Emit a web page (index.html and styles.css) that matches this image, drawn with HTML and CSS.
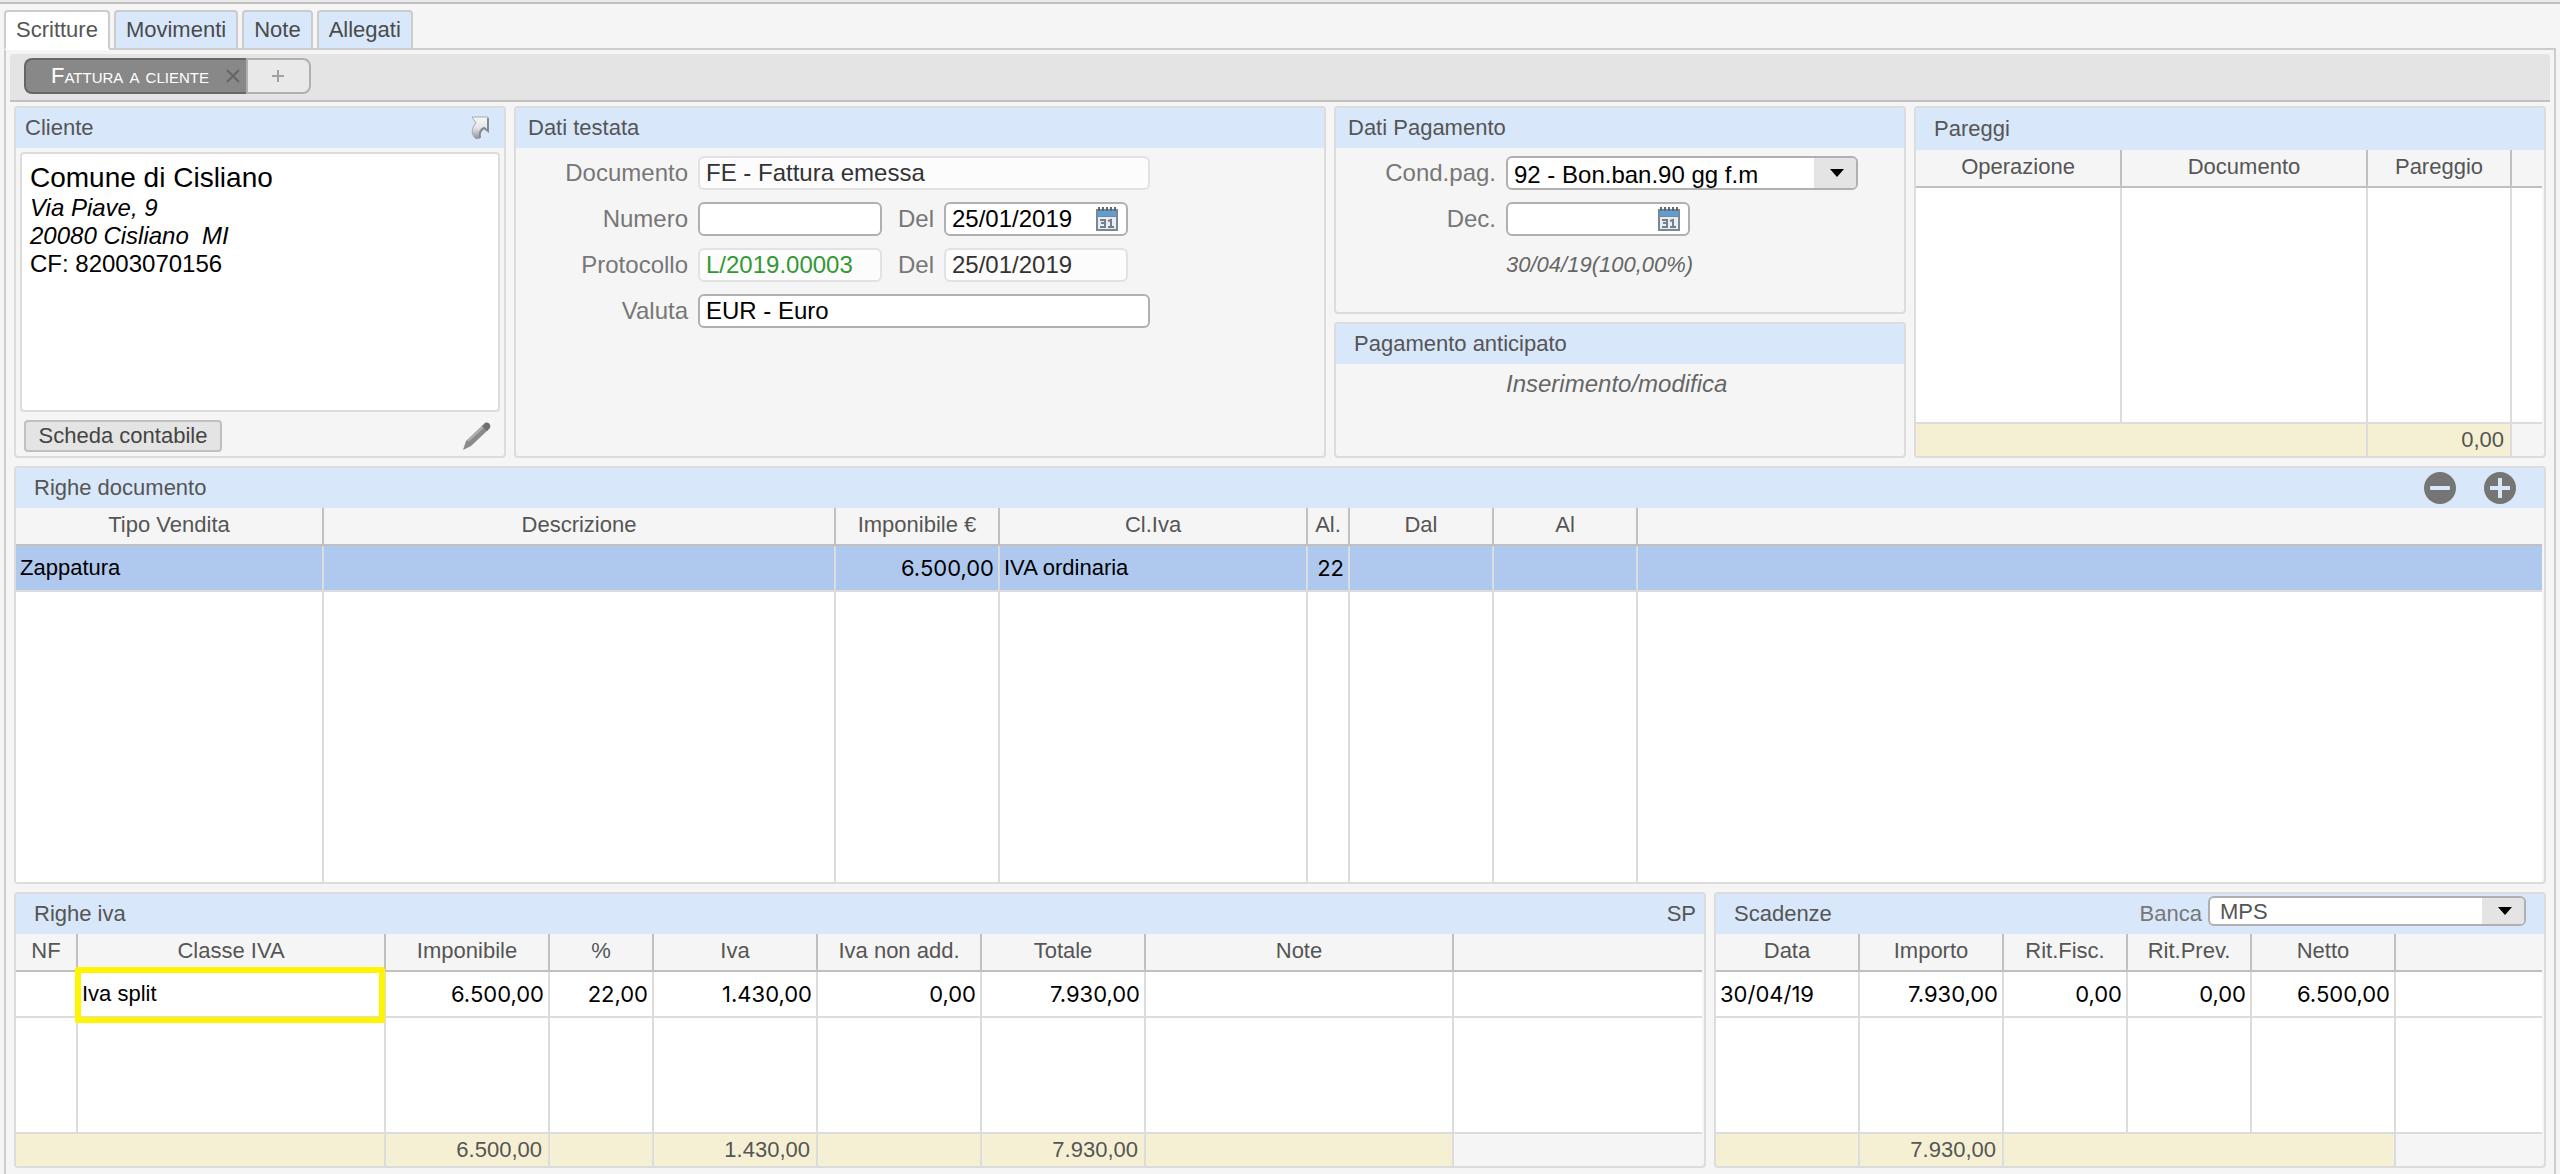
FILE: index.html
```html
<!DOCTYPE html>
<html lang="it">
<head>
<meta charset="utf-8">
<title>Scritture - Fattura a cliente</title>
<link rel="stylesheet" href="styles.css">
</head>
<body>
<svg class="sprite" aria-hidden="true">
  <symbol id="calendar" viewBox="0 0 24 24">
    <rect x="1" y="2" width="22" height="22" fill="#7b8794"/>
    <rect x="3" y="4" width="18" height="5" fill="#5d9fd0"/>
    <rect x="3" y="10" width="18" height="12" fill="#e9edf2"/>
    <path d="M4 0v4M8 0v4M12 0v4M16 0v4M20 0v4" stroke="#5f6871" stroke-width="2"/>
    <path d="M5 13h5v7h-5M6 16h4M13 14l3-1v7M13 20h6" fill="none" stroke="#747f8c" stroke-width="2"/>
  </symbol>
</svg>
<div class="page">
  <nav class="tabs">
    <button class="tab tab-active" type="button">Scritture</button>
    <button class="tab" type="button">Movimenti</button>
    <button class="tab" type="button">Note</button>
    <button class="tab" type="button">Allegati</button>
  </nav>
  <main class="frame">
    <div class="subtabs">
      <div class="subtab">
        <button class="subtab-name" type="button">Fattura a cliente</button>
        <button class="subtab-close" type="button" aria-label="Chiudi"><svg width="14" height="14" viewBox="0 0 14 14"><path d="M1 1l12 12M13 1L1 13" stroke="#656565" stroke-width="2"/></svg></button>
      </div>
      <button class="subtab-add" type="button" aria-label="Aggiungi"><svg width="12" height="12" viewBox="0 0 12 12"><path d="M6 0v12M0 6h12" stroke="#a2a2a2" stroke-width="2"/></svg></button>
    </div>
    <div class="content">
      <div class="top">
        <section class="panel">
          <header class="head">
            <h2>Cliente</h2>
            <button class="icon-btn open-btn" type="button" aria-label="Apri"><svg width="20" height="24" viewBox="0 0 20 24">
              <defs><linearGradient id="steel" x1="0" y1="0" x2="0" y2="1"><stop offset="0" stop-color="#f6f7f8"/><stop offset=".5" stop-color="#e2e5e8"/><stop offset="1" stop-color="#8b929a"/></linearGradient></defs>
              <path d="M2 1H18V15L14 12C10 14 9 17 10 22L6 23C1 19 1 12 6 7Z" fill="url(#steel)" stroke="#a4abb3" stroke-width="1"/>
              <path d="M18 2V15L14 12C10 14 9 17 10 22" fill="none" stroke="#848a92" stroke-width="2"/>
            </svg></button>
          </header>
          <div class="client-body">
            <address class="client-card">
              <strong>Comune di Cisliano</strong>
              <em>Via Piave, 9</em>
              <em>20080 Cisliano&nbsp; MI</em>
              <span>CF: 82003070156</span>
            </address>
            <div class="client-actions">
              <button class="push" type="button">Scheda contabile</button>
              <button class="icon-btn" type="button" aria-label="Modifica"><svg width="30" height="30" viewBox="0 0 30 30"><path d="M1 29l3-9L21 4l5 5L9 25z" fill="#8a8a8a"/><path d="M6 20L21 6" stroke="#b0b0b0" stroke-width="2"/><path d="M22 3c3-4 9 1 5 5l-2 2-5-5z" fill="#6e6e6e"/></svg></button>
            </div>
          </div>
        </section>

        <section class="panel">
          <header class="head form-head"><h2>Dati testata</h2></header>
          <form class="form form-doc">
            <label for="doc">Documento</label>
            <input id="doc" class="field wide" type="text" value="FE - Fattura emessa" readonly>
            <label for="num">Numero</label>
            <input id="num" class="field" type="text">
            <label for="num-date">Del</label>
            <span class="date"><input id="num-date" class="field" type="text" value="25/01/2019"><button type="button" aria-label="Calendario"><svg width="24" height="24"><use href="#calendar"/></svg></button></span>
            <label class="row-start" for="prot">Protocollo</label>
            <input id="prot" class="field green" type="text" value="L/2019.00003" readonly>
            <label for="prot-date">Del</label>
            <input id="prot-date" class="field" type="text" value="25/01/2019" readonly>
            <label class="row-start" for="valuta">Valuta</label>
            <input id="valuta" class="field wide" type="text" value="EUR - Euro">
          </form>
        </section>

        <div class="stack">
          <section class="panel">
            <header class="head form-head"><h2>Dati Pagamento</h2></header>
            <form class="form form-pay">
              <label for="cond">Cond.pag.</label>
              <span class="pick pick-cond"><select id="cond" class="field"><option>92 - Bon.ban.90 gg f.m</option></select></span>
              <label for="dec">Dec.</label>
              <span class="date"><input id="dec" class="field" type="text"><button type="button" aria-label="Calendario"><svg width="24" height="24"><use href="#calendar"/></svg></button></span>
              <em class="due">30/04/19(100,00%)</em>
            </form>
          </section>
          <section class="panel">
            <header class="head indent"><h2>Pagamento anticipato</h2></header>
            <a class="edit" href="#">Inserimento/modifica</a>
          </section>
        </div>

        <section class="panel">
          <header class="head indent tall"><h2>Pareggi</h2></header>
          <div class="grid">
            <table>
              <colgroup><col class="w206"><col class="w246"><col class="w144"><col></colgroup>
              <thead><tr><th>Operazione</th><th>Documento</th><th>Pareggio</th><th></th></tr></thead>
              <tbody><tr class="fill"><td></td><td></td><td></td><td></td></tr></tbody>
              <tfoot><tr><td colspan="2"></td><td>0,00</td><td class="none"></td></tr></tfoot>
            </table>
          </div>
        </section>
      </div>

      <section class="panel lines">
        <header class="head indent lines-head">
          <h2>Righe documento</h2>
          <div class="line-tools">
            <button class="icon-btn" type="button" aria-label="Rimuovi riga"><svg width="32" height="32" viewBox="0 0 32 32"><circle cx="16" cy="16" r="16" fill="#757575"/><rect x="6" y="14" width="20" height="4" rx="1" fill="#d8e8fa"/></svg></button>
            <button class="icon-btn" type="button" aria-label="Aggiungi riga"><svg width="32" height="32" viewBox="0 0 32 32"><circle cx="16" cy="16" r="16" fill="#757575"/><path d="M6 16h20M16 6v20" stroke="#d8e8fa" stroke-width="4"/></svg></button>
          </div>
        </header>
        <div class="grid">
          <table>
            <colgroup><col class="w308"><col class="w512"><col class="w164"><col class="w308"><col class="w42"><col class="w144"><col class="w144"><col></colgroup>
            <thead><tr><th>Tipo Vendita</th><th>Descrizione</th><th>Imponibile €</th><th>Cl.Iva</th><th>Al.</th><th>Dal</th><th>Al</th><th></th></tr></thead>
            <tbody>
              <tr class="selected"><td>Zappatura</td><td></td><td class="num">6.500,00</td><td>IVA ordinaria</td><td class="num">22</td><td></td><td></td><td></td></tr>
              <tr class="fill"><td></td><td></td><td></td><td></td><td></td><td></td><td></td><td></td></tr>
            </tbody>
          </table>
        </div>
      </section>

      <div class="bottom">
        <section class="panel">
          <header class="head indent"><h2>Righe iva</h2><span class="flag">SP</span></header>
          <div class="grid">
            <table>
              <colgroup><col class="w62"><col class="w308"><col class="w164"><col class="w104"><col class="w164"><col class="w164"><col class="w164"><col class="w308"><col></colgroup>
              <thead><tr><th>NF</th><th>Classe IVA</th><th>Imponibile</th><th>%</th><th>Iva</th><th>Iva non add.</th><th>Totale</th><th>Note</th><th></th></tr></thead>
              <tbody>
                <tr><td></td><td class="marked">Iva split</td><td class="num">6.500,00</td><td class="num">22,00</td><td class="num">1.430,00</td><td class="num">0,00</td><td class="num">7.930,00</td><td></td><td></td></tr>
                <tr class="fill"><td></td><td></td><td></td><td></td><td></td><td></td><td></td><td></td><td></td></tr>
              </tbody>
              <tfoot><tr><td colspan="2"></td><td>6.500,00</td><td></td><td>1.430,00</td><td></td><td>7.930,00</td><td></td><td class="none"></td></tr></tfoot>
            </table>
          </div>
        </section>
        <section class="panel">
          <header class="head indent">
            <h2>Scadenze</h2>
            <div class="bank">
              <label for="bank">Banca</label>
              <span class="pick pick-bank"><select id="bank" class="field"><option>MPS</option></select></span>
            </div>
          </header>
          <div class="grid">
            <table>
              <colgroup><col class="w144"><col class="w144"><col class="w124"><col class="w124"><col class="w144"><col></colgroup>
              <thead><tr><th>Data</th><th>Importo</th><th>Rit.Fisc.</th><th>Rit.Prev.</th><th>Netto</th><th></th></tr></thead>
              <tbody>
                <tr><td class="when">30/04/19</td><td class="num">7.930,00</td><td class="num">0,00</td><td class="num">0,00</td><td class="num">6.500,00</td><td></td></tr>
                <tr class="fill"><td></td><td></td><td></td><td></td><td></td><td></td></tr>
              </tbody>
              <tfoot><tr><td></td><td>7.930,00</td><td colspan="3"></td><td class="none"></td></tr></tfoot>
            </table>
          </div>
        </section>
      </div>
    </div>
  </main>
</div>
</body>
</html>
```

FILE: styles.css
```css
*, *::before, *::after { box-sizing: border-box; }

body {
  margin: 0;
  background: #f5f5f5;
  color: #555;
  font: 22px "Liberation Sans", Arial, sans-serif;
}

button, input, select { font: inherit; color: inherit; }
button { margin: 0; padding: 0; border: 0; background: none; }
svg { display: block; }
.sprite { position: absolute; width: 0; height: 0; }

.page {
  display: flex;
  flex-direction: column;
  min-height: 100vh;
  padding: 8px 4px 0;
  border-top: 2px solid #e8e8e8;
  box-shadow: inset 0 2px #c0c0c0;
}

/* Main tabs */
.tabs { display: flex; gap: 4px; margin-bottom: -2px; }
.tab {
  height: 40px;
  padding: 0 10px;
  border: 2px solid #ccc;
  border-radius: 4px 4px 0 0;
  background: #d8e8fa;
  color: #4a4a4a;
  position: relative;
}
.tab-active { background: #fff; border-bottom-color: #fff; color: #555; z-index: 1; }

.frame {
  flex: 1;
  display: flex;
  flex-direction: column;
  padding: 4px 4px 0;
  border: 2px solid #ccc;
  border-bottom: 0;
}

/* Document tabs */
.subtabs {
  display: flex;
  padding: 4px 14px 6px;
  border-bottom: 2px solid #c0c0c0;
  border-radius: 4px 4px 0 0;
  background: #e4e4e4;
}
.subtab {
  display: flex;
  align-items: center;
  gap: 17px;
  height: 36px;
  padding: 0 6px 0 25px;
  border: 2px solid #666;
  border-right: 0;
  border-radius: 8px 0 0 8px;
  background: #888;
  color: #fff;
}
.subtab-name { font-variant: small-caps; }
.subtab-add {
  display: grid;
  place-items: center;
  width: 65px;
  height: 36px;
  border: 2px solid #b0b0b0;
  border-radius: 0 8px 8px 0;
  background: #e9e9e9;
}

.content {
  flex: 1;
  display: flex;
  flex-direction: column;
  gap: 8px;
  padding: 4px 4px 6px;
}

/* Panels */
.panel {
  display: flex;
  flex-direction: column;
  min-width: 0;
  border: 2px solid #dcdcdc;
  border-radius: 4px;
}
.head {
  display: flex;
  align-items: center;
  justify-content: space-between;
  height: 40px;
  padding: 0 14px 0 9px;
  border-radius: 2px 2px 0 0;
  background: #d8e8fa;
}
.head h2 { margin: 0; font-size: 22px; font-weight: 400; }
.form-head { padding-left: 12px; }
.indent { padding: 0 8px 0 18px; }
.tall { height: 42px; }

.top {
  display: grid;
  grid-template-columns: 492fr 812fr 572fr 632fr;
  gap: 8px;
  min-height: 352px;
}
.stack { display: grid; grid-template-rows: 208px 1fr; gap: 8px; min-width: 0; }
.lines { flex: 1; }
.bottom {
  display: grid;
  grid-template-columns: 1692fr 832fr;
  gap: 8px;
  min-height: 276px;
}

/* Client */
.client-body { flex: 1; display: flex; flex-direction: column; padding: 4px; }
.client-card {
  flex: 1;
  display: flex;
  flex-direction: column;
  padding: 8px;
  border: 2px solid #dcdcdc;
  border-radius: 4px;
  background: #fff;
  color: #000;
  font-size: 24px;
  font-style: normal;
  line-height: 28px;
}
.client-card strong { font-size: 28px; font-weight: 400; line-height: 32px; }
.client-actions {
  display: flex;
  justify-content: space-between;
  align-items: center;
  padding: 8px 8px 0 4px;
}
.push {
  height: 32px;
  width: 198px;
  border: 2px solid #c0c0c0;
  border-radius: 4px;
  background: #e4e4e4;
  color: #444;
}

/* Forms */
.form { display: grid; row-gap: 12px; align-items: center; padding-top: 8px; font-size: 24px; color: #777; }
.form label { text-align: right; padding-right: 10px; }
.form-doc { grid-template-columns: 182px 184px 62px 184px 22px; }
.form-pay { grid-template-columns: 170px 352px; }
.row-start { grid-column: 1; }
.wide { grid-column: span 4; }
.field {
  width: 100%;
  height: 34px;
  padding: 0 6px;
  border: 2px solid #b0b0b0;
  border-radius: 6px;
  background: #fff;
  color: #000;
}
.field:read-only:not(select) { border-color: #e2e2e2; background: #fcfcfc; color: #333; }
.field.green:read-only { color: #339933; }
.date { position: relative; width: 184px; }
.date .field { display: block; }
.date button { position: absolute; right: 9px; top: 5px; }
.pick { position: relative; }
.pick select { display: block; appearance: none; }
.pick::before {
  content: "";
  position: absolute;
  top: 2px; right: 2px; bottom: 2px;
  width: 42px;
  border-radius: 0 4px 4px 0;
  background: #e4e4e4;
  pointer-events: none;
}
.pick::after {
  content: "";
  position: absolute;
  top: 50%; right: 14px;
  margin-top: -4px;
  border: 7px solid transparent;
  border-top: 8px solid #000;
  border-bottom: 0;
  pointer-events: none;
}
.form > * { margin: 0; min-height: 34px; line-height: 34px; }
.due { grid-column: 2; font-size: 22px; color: #666; }
.edit {
  padding: 8px 0 0 170px;
  color: #666;
  font-size: 24px;
  font-style: italic;
  line-height: 24px;
  text-decoration: none;
}
.bank { display: flex; gap: 6px; align-items: center; height: 100%; padding-right: 10px; color: #777; }
.pick-bank { align-self: flex-start; width: 318px; margin-top: 2px; color: #555; }
.pick-bank .field { height: 30px; padding: 0 10px; color: #555; }

/* Tables */
.lines-head { padding-right: 28px; }
.line-tools { display: flex; gap: 28px; }
.grid { flex: 1; display: flex; padding-right: 2px; }
table { flex: 1; width: 100%; table-layout: fixed; border-spacing: 0; }
th, td { padding: 0 4px; border-right: 2px solid #dcdcdc; white-space: nowrap; overflow: hidden; }
th:last-child, td:last-child { border-right: 0; }
th {
  height: 38px;
  padding: 0 4px 3px;
  border-right-color: #c0c0c0;
  border-bottom: 2px solid #c0c0c0;
  font-weight: 400;
}
tbody td { height: 46px; border-bottom: 2px solid #dcdcdc; background: #fff; color: #000; }
.fill td { height: auto; border-bottom: 0; }
.selected td { background: #afc9ee; }
.num { text-align: right; }
.num, .when { font-family: Inter, "Liberation Sans", sans-serif; }
tfoot td {
  height: 34px;
  padding-right: 6px;
  border-top: 2px solid #dcdcdc;
  background: #f5f0d3;
  text-align: right;
}
tfoot .none { background: #f5f5f5; }
td.marked { position: relative; overflow: visible; }
.marked::after {
  content: "";
  position: absolute;
  inset: -5px -1px -7px -3px;
  border: 6px solid #fff500;
  border-radius: 2px;
}

.w42 { width: 42px; }
.w62 { width: 62px; }
.w104 { width: 104px; }
.w124 { width: 124px; }
.w144 { width: 144px; }
.w164 { width: 164px; }
.w206 { width: 206px; }
.w246 { width: 246px; }
.w308 { width: 308px; }
.w512 { width: 512px; }
```
